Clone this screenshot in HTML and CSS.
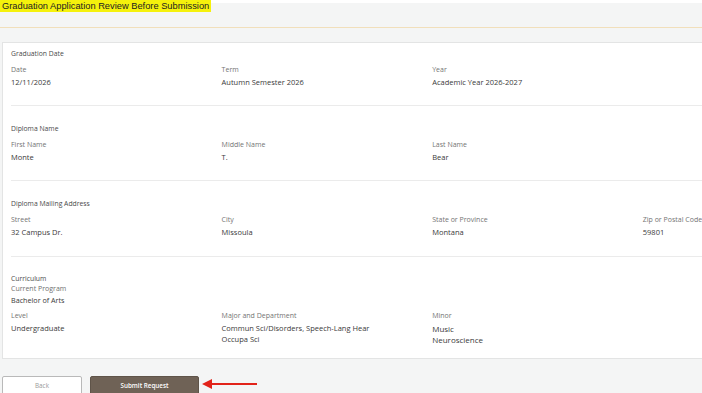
FILE: index.html
```html
<!DOCTYPE html>
<html lang="en">
<head>
  <meta charset="UTF-8">
  <meta name="viewport" content="width=device-width, initial-scale=1.0">
  <title>Graduation Application Review Before Submission</title>
  <link rel="stylesheet" href="styles.css">
</head>
<body>
  <!-- highlighted page title -->
  <h1 class="page-title"><span>Graduation Application Review Before Submission</span></h1>

  <div class="page-header"></div>

  <div class="page-body">
    <div class="review-card">

      <div class="review-section first">
        <div class="section-title">Graduation Date</div>
        <div class="field-grid">
          <div class="field">
            <div class="field-label">Date</div>
            <div class="field-value">12/11/2026</div>
          </div>
          <div class="field">
            <div class="field-label">Term</div>
            <div class="field-value">Autumn Semester 2026</div>
          </div>
          <div class="field">
            <div class="field-label">Year</div>
            <div class="field-value">Academic Year 2026-2027</div>
          </div>
        </div>
      </div>

      <div class="review-section">
        <div class="section-title">Diploma Name</div>
        <div class="field-grid">
          <div class="field">
            <div class="field-label">First Name</div>
            <div class="field-value">Monte</div>
          </div>
          <div class="field">
            <div class="field-label">Middle Name</div>
            <div class="field-value">T.</div>
          </div>
          <div class="field">
            <div class="field-label">Last Name</div>
            <div class="field-value">Bear</div>
          </div>
        </div>
      </div>

      <div class="review-section">
        <div class="section-title">Diploma Mailing Address</div>
        <div class="field-grid">
          <div class="field">
            <div class="field-label">Street</div>
            <div class="field-value">32 Campus Dr.</div>
          </div>
          <div class="field">
            <div class="field-label">City</div>
            <div class="field-value">Missoula</div>
          </div>
          <div class="field">
            <div class="field-label">State or Province</div>
            <div class="field-value">Montana</div>
          </div>
          <div class="field">
            <div class="field-label">Zip or Postal Code</div>
            <div class="field-value">59801</div>
          </div>
        </div>
      </div>

      <div class="review-section last">
        <div class="section-title">Curriculum</div>
        <div class="program-label">Current Program</div>
        <div class="program-name">Bachelor of Arts</div>
        <div class="field-grid">
          <div class="field">
            <div class="field-label">Level</div>
            <div class="field-value">Undergraduate</div>
          </div>
          <div class="field">
            <div class="field-label">Major and Department</div>
            <div class="field-value">Commun Sci/Disorders, Speech-Lang Hear<br>Occupa Sci</div>
          </div>
          <div class="field">
            <div class="field-label">Minor</div>
            <div class="field-value big">Music<br>Neuroscience</div>
          </div>
        </div>
      </div>

    </div>

    <div class="actions">
      <button class="btn btn-back">Back</button>
      <button class="btn btn-submit">Submit Request</button>
      <svg class="pointer-arrow" width="58" height="14" viewBox="0 0 58 14">
        <line x1="9" y1="7" x2="56" y2="7" stroke="#e2231a" stroke-width="2"/>
        <polygon points="1,7 11,2 11,12" fill="#e2231a"/>
      </svg>
    </div>
  </div>
</body>
</html>
```

FILE: styles.css
```css
body {
  margin: 0;
  padding: 0;
  overflow: hidden;
  background: #f4f5f5;
  font-family: "Open Sans", "Noto Sans", sans-serif;
  width: 702px;
  height: 393px;
  position: relative;
}

/* 标题高亮 */
.page-title {
  position: absolute;
  top: 0;
  left: 0;
  margin: 0;
  font-family: "Liberation Sans", Arial, sans-serif;
  font-weight: normal;
  font-size: 9.3px;
  line-height: 12px;
  color: #222;
  z-index: 2;
}

.page-title span {
  background: #f5f10c;
  padding: 0 2px 0 2px;
  display: inline-block;
}

.page-header {
  border-top: 3px solid #fff;
  height: 24px;
  border-bottom: 1px solid #f1dfbb;
}

.page-body {
  padding-top: 14px;
  overflow: hidden;
}

.review-card {
  margin-left: 2px;
  margin-right: -20px;
  background: #fff;
  border: 1px solid #e3e4e4;
  padding: 0 0 0 8px;
}

.review-section {
  padding: 18px 0 17px;
  border-bottom: 1px solid #ebebeb;
}

.review-section.first {
  padding-top: 6px;
  padding-bottom: 16px;
}

.review-section.last {
  border-bottom: none;
  padding-top: 17px;
  padding-bottom: 12px;
}

.section-title {
  font-size: 6.8px;
  line-height: 10px;
  color: #4a4a4a;
}

.program-label {
  font-size: 7px;
  line-height: 9px;
  color: #707070;
}

.program-name {
  margin-top: 2px;
  font-size: 7.2px;
  line-height: 10px;
  color: #3a3a3a;
}

.field-grid {
  display: grid;
  grid-template-columns: repeat(4, 210.6px);
  margin-top: 6px;
}

.field-label {
  font-size: 7px;
  line-height: 10px;
  color: #747474;
}

.field-value {
  margin-top: 2px;
  font-size: 7.5px;
  line-height: 11.5px;
  color: #3a3a3a;
}

.field-value.big {
  font-size: 8px;
}

.actions {
  display: flex;
  align-items: center;
  gap: 8px;
  margin-top: 17px;
  padding-left: 2px;
}

.btn {
  height: 19px;
  font-family: "Open Sans", "Noto Sans", sans-serif;
  font-size: 6.3px;
  border-radius: 2px 2px 0 0;
  padding: 0;
  cursor: pointer;
}

.btn-back {
  width: 80px;
  background: #fff;
  border: 1px solid #b9b9b9;
  color: #9a9a9a;
}

.btn-submit {
  width: 109px;
  background: #6f6256;
  border: 1px solid #5f5449;
  color: #fff;
  font-weight: 600;
}

.pointer-arrow {
  margin-left: -6px;
  margin-top: -2px;
}
```
